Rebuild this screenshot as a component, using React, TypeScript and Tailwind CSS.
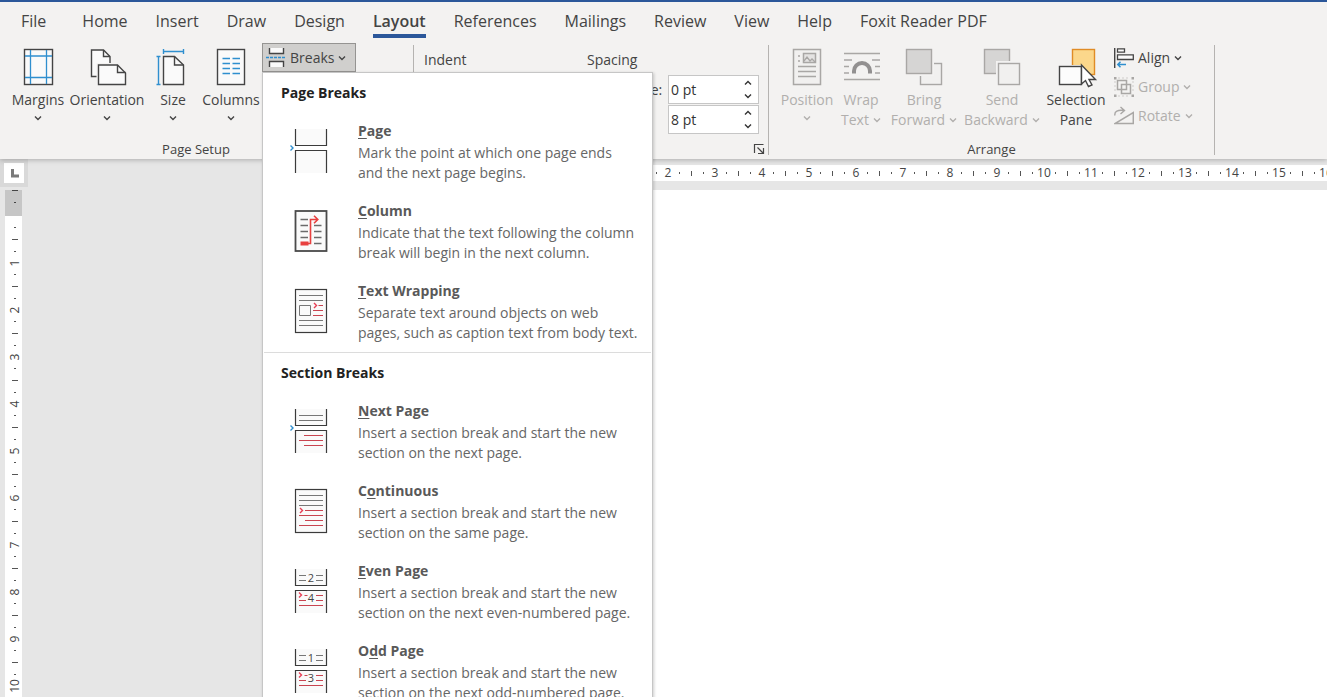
import type { ReactNode } from "react";
import clsx from "clsx";

const TABS = [
  "File",
  "Home",
  "Insert",
  "Draw",
  "Design",
  "Layout",
  "References",
  "Mailings",
  "Review",
  "View",
  "Help",
  "Foxit Reader PDF",
];

const DARK = "#444444";
const BLUE = "#2f8fcf";
const GRAY = "#a9a7a5";
const RED = "#c84450";

/* ---------- small shared pieces ---------- */

function Chevron({ up = false }: { up?: boolean }) {
  return (
    <svg width="8" height="6" viewBox="0 0 8 6" fill="none" stroke="currentColor" strokeWidth="1.4">
      <path d={up ? "M1 4.5 4 1.5 7 4.5" : "M1 1.5 4 4.5 7 1.5"} />
    </svg>
  );
}

function BigIcon({ children }: { children: ReactNode }) {
  return (
    <svg width="38" height="38" viewBox="0 0 38 38" fill="none" className="overflow-visible">
      {children}
    </svg>
  );
}

function SmallIcon({ children }: { children: ReactNode }) {
  return (
    <svg width="20" height="20" viewBox="0 0 20 20" fill="none" className="shrink-0">
      {children}
    </svg>
  );
}

type BigButtonProps = {
  icon: ReactNode;
  lines: string[];
  width: string;
  disabled?: boolean;
  chevron?: "below" | "inline";
};

function BigButton({ icon, lines, width, disabled, chevron }: BigButtonProps) {
  return (
    <button
      type="button"
      disabled={disabled}
      className={clsx(
        "flex shrink-0 flex-col items-center pt-[5px] text-sm leading-5 whitespace-nowrap",
        disabled ? "text-[#b1afad]" : "text-[#444444]",
        width
      )}
    >
      {icon}
      <span className="mt-1">{lines[0]}</span>
      {lines[1] && (
        <span className="flex items-center gap-1">
          {lines[1]}
          {chevron === "inline" && <Chevron />}
        </span>
      )}
      {chevron === "below" && (
        <span className="flex h-4 items-center">
          <Chevron />
        </span>
      )}
    </button>
  );
}

function SmallButton({ icon, label, disabled }: { icon: ReactNode; label: string; disabled?: boolean }) {
  return (
    <button
      type="button"
      disabled={disabled}
      className={clsx(
        "flex h-[29px] items-center gap-1 text-sm",
        disabled ? "text-[#b1afad]" : "text-[#444444]"
      )}
    >
      {icon}
      {label}
      <Chevron />
    </button>
  );
}

function GroupCaption({ children }: { children: ReactNode }) {
  return <div className="text-center text-[13px] leading-4 text-[#444444]">{children}</div>;
}

/* ---------- ribbon icons ---------- */

const marginsIcon = (
  <BigIcon>
    <rect x="5.5" y="1.5" width="28" height="35" fill="#fafafa" stroke={DARK} strokeWidth="1.4" />
    <path d="M11.5 2v34M27.5 2v34M6 8h27M6 29.5h27" stroke={BLUE} strokeWidth="1.3" />
  </BigIcon>
);

const orientationIcon = (
  <BigIcon>
    <path d="M9.5 28.5H3.5V2H15.5L22 8.5V15" fill="#fafafa" stroke={DARK} strokeWidth="1.4" />
    <path d="M15.5 2V8.5H22" stroke={DARK} strokeWidth="1.4" />
    <path d="M8.5 15H24V19H12V38H8.5Z" fill="#f3f2f1" />
    <path d="M10.5 17H29.5L37.5 25V36.5H10.5Z" fill="#fafafa" stroke={DARK} strokeWidth="1.4" />
    <path d="M29.5 17V24.5H37.5" stroke={DARK} strokeWidth="1.4" />
  </BigIcon>
);

const sizeIcon = (
  <BigIcon>
    <path d="M9.5 8.5H20.5L29.5 17V36.5H9.5Z" fill="#fafafa" stroke={DARK} strokeWidth="1.4" />
    <path d="M20.5 8.5V17H29.5" stroke={DARK} strokeWidth="1.4" />
    <path d="M9.5 3.5h20M9.5 1v5M29.5 1v5M4.5 8.5v28M2.5 8.5h4M2.5 36.5h4" stroke={BLUE} strokeWidth="1.4" />
  </BigIcon>
);

const columnsIcon = (
  <BigIcon>
    <rect x="5.5" y="1.5" width="27" height="35" fill="#fafafa" stroke={DARK} strokeWidth="1.4" />
    <path
      d="M10.5 10.5h7.5M10.5 15.5h7.5M10.5 20.5h7.5M10.5 25.5h7.5M20.5 10.5h7.5M20.5 15.5h7.5M20.5 20.5h7.5M20.5 25.5h7.5"
      stroke={BLUE}
      strokeWidth="1.5"
    />
  </BigIcon>
);

const breaksIcon = (
  <SmallIcon>
    <path d="M3.5 0V5.5H17.5V0M3.5 19V13.5H17.5V19" fill="#fafafa" stroke={DARK} strokeWidth="1.4" />
    <path d="M0 9.5H20" stroke={BLUE} strokeWidth="1.4" strokeDasharray="3 1" />
  </SmallIcon>
);

const positionIcon = (
  <BigIcon>
    <rect x="5.5" y="1.5" width="27" height="35" fill="#f1f0ef" stroke={GRAY} strokeWidth="1.5" />
    <rect x="15.5" y="5.5" width="12" height="9" fill="#e4e3e2" stroke={GRAY} strokeWidth="1.5" />
    <path d="M16 13l3-4 3 4 2-2 3 3" stroke={GRAY} strokeWidth="1.3" />
    <path d="M10 8h2M10 13h2M10 18.5h18M10 23.5h18M10 28.5h18" stroke={GRAY} strokeWidth="1.3" />
  </BigIcon>
);

const wrapIcon = (
  <BigIcon>
    <path
      d="M2 5.5h36M2 12h8M30 12h8M2 18.5h5M33 18.5h5M2 25h5M33 25h5M2 31.5h36"
      stroke={GRAY}
      strokeWidth="1.3"
    />
    <path d="M12 25.5V23A8 8 0 0 1 28 23V25.5" stroke="#929090" strokeWidth="4" />
  </BigIcon>
);

const bringIcon = (
  <BigIcon>
    <rect x="15.5" y="15.5" width="21" height="21" fill="#f1f0ef" stroke={GRAY} strokeWidth="1.4" />
    <rect x="1" y="1" width="28" height="27" fill="#f3f2f1" />
    <rect x="1.5" y="1.5" width="25" height="24" fill="#d6d5d4" stroke={GRAY} strokeWidth="1.4" />
  </BigIcon>
);

const sendIcon = (
  <BigIcon>
    <rect x="1.5" y="1.5" width="25" height="24" fill="#d6d5d4" stroke={GRAY} strokeWidth="1.4" />
    <rect x="13" y="13" width="24" height="24" fill="#f3f2f1" />
    <rect x="15.5" y="15.5" width="21" height="21" fill="#f1f0ef" stroke={GRAY} strokeWidth="1.4" />
  </BigIcon>
);

const selectionIcon = (
  <BigIcon>
    <rect x="15.5" y="1.5" width="22" height="25" fill="#fbd78b" stroke="#e08c26" strokeWidth="1.4" />
    <rect x="1" y="17" width="25" height="21" fill="#f3f2f1" />
    <rect x="2.5" y="18.5" width="22" height="18" fill="#fcfcfc" stroke={DARK} strokeWidth="1.4" />
    <path
      d="M24.5 17V36L28.5 32.5L31.5 38.5L35 37L32 31.5H38.5Z"
      fill="#ffffff"
      stroke={DARK}
      strokeWidth="1.4"
    />
  </BigIcon>
);

const alignIcon = (
  <SmallIcon>
    <path d="M.7 0V20" stroke={DARK} strokeWidth="1.4" />
    <path d="M3.5 .8H10.5V4.2H3.5ZM3.5 6.8H19.3V11.5H3.5Z" fill="#fafafa" stroke={DARK} strokeWidth="1.3" />
    <path d="M12 16.5H4M6.5 13.8 3.8 16.5 6.5 19.2" stroke={BLUE} strokeWidth="1.5" />
  </SmallIcon>
);

const groupIcon = (
  <SmallIcon>
    <path d="M3.5 3.5H12.5V12.5H3.5ZM7.5 7.5H16.5V16.5H7.5Z" stroke={GRAY} strokeWidth="1.5" />
    <path d="M0 0h2.5v2.5h-2.5ZM17.5 0h2.5v2.5h-2.5ZM0 17.5h2.5v2.5h-2.5ZM17.5 17.5h2.5v2.5h-2.5Z" fill={GRAY} />
    <path d="M4 1h12M4 19h12M1 4v12M19 4v12" stroke="#cfcdcb" strokeDasharray="2 2" />
  </SmallIcon>
);

const rotateIcon = (
  <SmallIcon>
    <path d="M1 17.5H19.3V6.5Z" stroke={GRAY} strokeWidth="1.5" />
    <path d="M1 9.5C0 5.5 4 3.5 10 4.5M6.5 1 10.5 4.5 6.5 8" stroke={GRAY} strokeWidth="1.4" />
  </SmallIcon>
);

/* ---------- Breaks menu ---------- */

function MenuIcon({ children }: { children: ReactNode }) {
  return (
    <svg width="40" height="48" viewBox="0 0 40 48" fill="none" className="mt-[15px] shrink-0">
      {children}
    </svg>
  );
}

function SplitSheets() {
  return <path d="M5.5 1V17.5H36.5V1M5.5 45V22.5H36.5V45" fill="#fafafa" stroke="#3b3b3b" strokeWidth="1.2" />;
}

function FullSheet() {
  return <rect x="5.5" y="1.5" width="31" height="43" fill="#fafafa" stroke="#3b3b3b" strokeWidth="1.2" />;
}

function NumberedSheets({ top, bottom }: { top: string; bottom: string }) {
  return (
    <MenuIcon>
      <SplitSheets />
      <path d="M9 7.5h7M9 12.5h7M26 7.5h7M26 12.5h7" stroke="#777777" />
      <path d="M14.5 27.5h3M26 27.5h7M9 32.5h7M26 32.5h7M9 37.5h24" stroke={RED} />
      <path d="M9 24.5 11.5 27 9 29.5" stroke="#e83e55" strokeWidth="1.4" />
      <text x="21" y="14" textAnchor="middle" fontSize="11" fill="#444444">
        {top}
      </text>
      <text x="21" y="34" textAnchor="middle" fontSize="11" fill="#444444">
        {bottom}
      </text>
    </MenuIcon>
  );
}

const pageIcon = (
  <MenuIcon>
    <SplitSheets />
    <path d="M.5 17.5 3 20 .5 22.5" stroke={BLUE} strokeWidth="1.4" />
  </MenuIcon>
);

const columnIcon = (
  <MenuIcon>
    <rect x="5.5" y="3" width="31" height="40" fill="#fafafa" stroke="#4a4a4a" strokeWidth="1.8" />
    <path
      d="M10.5 11.5H18M10.5 17.5H18M10.5 23.5H18M10.5 29.5H18M24 17.5h7.5M24 23.5h7.5M24 29.5h7.5M24 35.5h7.5"
      stroke="#6b6b6b"
      strokeWidth="1.3"
    />
    <rect x="10.5" y="33.5" width="8" height="4" fill="#e8403f" />
    <path d="M18 35.5H20.5V11.5H27.5M24 7.8 27.8 11.5 24 15.2" stroke="#e8403f" strokeWidth="1.6" />
  </MenuIcon>
);

const wrappingIcon = (
  <MenuIcon>
    <FullSheet />
    <path d="M9 7.5h24M9 12.5h24M9 32.5h24M9 37.5h24M9.5 17.5h11v10h-11Z" stroke="#777777" />
    <path d="M28.5 17.5H33M23 22.5H33M23 27.5H33" stroke={RED} />
    <path d="M24 15 26.5 17.5 24 20" stroke="#e83e55" strokeWidth="1.4" />
  </MenuIcon>
);

const nextPageIcon = (
  <MenuIcon>
    <SplitSheets />
    <path d="M9 7.5h24M9 12.5h24" stroke="#777777" />
    <path d="M14 27.5H33M9 32.5H33M14 37.5H33" stroke={RED} />
    <path d="M.5 17.5 3 20 .5 22.5" stroke={BLUE} strokeWidth="1.4" />
  </MenuIcon>
);

const continuousIcon = (
  <MenuIcon>
    <FullSheet />
    <path d="M9 7.5h24M9 12.5h24M9 17.5h24" stroke="#777777" />
    <path d="M15 22.5H33M9 27.5H33M15 32.5H33M9 37.5H33" stroke={RED} />
    <path d="M10 20 12.5 22.5 10 25" stroke="#e83e55" strokeWidth="1.4" />
  </MenuIcon>
);

type MenuEntry = {
  label: string;
  keyIndex: number;
  text: [string, string];
  icon: ReactNode;
};

const PAGE_BREAKS: MenuEntry[] = [
  {
    label: "Page",
    keyIndex: 0,
    text: ["Mark the point at which one page ends", "and the next page begins."],
    icon: pageIcon,
  },
  {
    label: "Column",
    keyIndex: 0,
    text: ["Indicate that the text following the column", "break will begin in the next column."],
    icon: columnIcon,
  },
  {
    label: "Text Wrapping",
    keyIndex: 0,
    text: ["Separate text around objects on web", "pages, such as caption text from body text."],
    icon: wrappingIcon,
  },
];

const SECTION_BREAKS: MenuEntry[] = [
  {
    label: "Next Page",
    keyIndex: 0,
    text: ["Insert a section break and start the new", "section on the next page."],
    icon: nextPageIcon,
  },
  {
    label: "Continuous",
    keyIndex: 1,
    text: ["Insert a section break and start the new", "section on the same page."],
    icon: continuousIcon,
  },
  {
    label: "Even Page",
    keyIndex: 0,
    text: ["Insert a section break and start the new", "section on the next even-numbered page."],
    icon: <NumberedSheets top="2" bottom="4" />,
  },
  {
    label: "Odd Page",
    keyIndex: 1,
    text: ["Insert a section break and start the new", "section on the next odd-numbered page."],
    icon: <NumberedSheets top="1" bottom="3" />,
  },
];

function MenuSection({ title, entries }: { title: string; entries: MenuEntry[] }) {
  return (
    <section>
      <h2 className="h-10 pl-[18px] text-sm leading-10 font-bold text-[#222222]">{title}</h2>
      {entries.map(({ label, keyIndex, text, icon }) => (
        <button
          key={label}
          type="button"
          role="menuitem"
          className="flex h-20 w-full gap-7 pl-[27px] text-left text-sm leading-5 whitespace-nowrap text-[#666666]"
        >
          {icon}
          <span className="pt-2">
            <span className="mb-[2px] block font-bold text-[#595959]">
              {label.slice(0, keyIndex)}
              <span className="underline underline-offset-2">{label[keyIndex]}</span>
              {label.slice(keyIndex + 1)}
            </span>
            {text[0]}
            <br />
            {text[1]}
          </span>
        </button>
      ))}
    </section>
  );
}

function BreaksMenu() {
  return (
    <div
      role="menu"
      className="absolute top-full left-0 z-20 w-[391px] border border-[#c6c6c6] bg-white shadow-[1px_1px_3px_rgba(0,0,0,0.2)]"
    >
      <MenuSection title="Page Breaks" entries={PAGE_BREAKS} />
      <hr className="mx-px -mt-px border-[#dcdcdc]" />
      <MenuSection title="Section Breaks" entries={SECTION_BREAKS} />
    </div>
  );
}

/* ---------- ribbon ---------- */

function SpacingField({ id, label, value }: { id: string; label: string; value: string }) {
  return (
    <div className="flex items-center justify-between">
      <label htmlFor={id} className="text-sm text-[#444444]">
        {label}
      </label>
      <div className="flex h-[29px] w-[91px] border border-[#c6c6c6] bg-white">
        <input id={id} defaultValue={value} className="w-full min-w-0 pl-[2px] text-sm text-[#333333] outline-none" />
        <div className="flex w-5 shrink-0 flex-col text-[#333333]">
          <button type="button" aria-label={`Increase ${label}`} className="flex flex-1 items-center justify-center">
            <Chevron up />
          </button>
          <button type="button" aria-label={`Decrease ${label}`} className="flex flex-1 items-center justify-center">
            <Chevron />
          </button>
        </div>
      </div>
    </div>
  );
}

function Ribbon() {
  return (
    <div className="flex h-[116px]">
      {/* Page Setup */}
      <div className="flex w-[413px] shrink-0 flex-col justify-between pb-[2px] pl-2">
        <div className="flex items-start">
          <BigButton icon={marginsIcon} lines={["Margins"]} width="w-[60px]" chevron="below" />
          <BigButton icon={orientationIcon} lines={["Orientation"]} width="w-[78px]" chevron="below" />
          <BigButton icon={sizeIcon} lines={["Size"]} width="w-[54px]" chevron="below" />
          <BigButton icon={columnsIcon} lines={["Columns"]} width="w-[62px]" chevron="below" />
          <div className="relative">
            <button
              type="button"
              aria-haspopup="menu"
              aria-expanded="true"
              className="flex h-[29px] w-[94px] items-center gap-1 border border-[#959492] bg-[#d0cfcd] pl-[3px] text-sm text-[#444444]"
            >
              {breaksIcon}
              Breaks
              <Chevron />
            </button>
            <BreaksMenu />
          </div>
        </div>
        <div className="pr-[29px]">
          <GroupCaption>Page Setup</GroupCaption>
        </div>
      </div>

      <div className="mt-[2px] mb-1 w-px shrink-0 bg-[#b5b3b1]" />

      {/* Paragraph */}
      <div className="flex w-[354px] shrink-0 flex-col justify-between pr-[9px] pb-1 pl-[10px] text-sm text-[#444444]">
        <div className="flex leading-[30px]">
          <div className="w-[163px] pt-[2px]">Indent</div>
          <div className="flex-1 pt-[2px]">
            <div>Spacing</div>
            <div className="flex flex-col gap-px pl-7">
              <SpacingField id="before" label="Before:" value="0 pt" />
              <SpacingField id="after" label="After:" value="8 pt" />
            </div>
          </div>
        </div>
        <button type="button" aria-label="Paragraph settings" className="-mr-[6px] self-end">
          <svg width="12" height="12" viewBox="0 0 12 12" fill="none" stroke={DARK} strokeWidth="1.2">
            <path d="M1.5 10V1.5H10.5M4.5 4.5 10 10M10.5 5V10.5H5" />
          </svg>
        </button>
      </div>

      <div className="mt-[2px] mb-1 w-px shrink-0 bg-[#b5b3b1]" />

      {/* Arrange */}
      <div className="flex w-[445px] shrink-0 flex-col justify-between pb-[2px]">
        <div className="flex items-start pl-[10px]">
          <BigButton icon={positionIcon} lines={["Position"]} width="w-[56px]" chevron="below" disabled />
          <BigButton icon={wrapIcon} lines={["Wrap", "Text"]} width="w-[52px]" chevron="inline" disabled />
          <BigButton icon={bringIcon} lines={["Bring", "Forward"]} width="w-[74px]" chevron="inline" disabled />
          <BigButton icon={sendIcon} lines={["Send", "Backward"]} width="w-[82px]" chevron="inline" disabled />
          <BigButton icon={selectionIcon} lines={["Selection", "Pane"]} width="w-[66px]" />
          <div className="pl-[5px]">
            <SmallButton icon={alignIcon} label="Align" />
            <SmallButton icon={groupIcon} label="Group" disabled />
            <SmallButton icon={rotateIcon} label="Rotate" disabled />
          </div>
        </div>
        <GroupCaption>Arrange</GroupCaption>
      </div>

      <div className="mt-[2px] mb-1 w-px shrink-0 bg-[#b5b3b1]" />
    </div>
  );
}

/* ---------- rulers ---------- */

function HorizontalRuler() {
  const marks = Array.from({ length: 30 }, (_, i) => i + 1);

  return (
    <div className="flex h-4 overflow-hidden bg-white pl-[142px] text-xs leading-4 text-[#444444]">
      {marks.map((n) => (
        <div key={n} className="grid w-[47px] shrink-0 grid-cols-4 items-center">
          <span className="flex justify-center">{n}</span>
          <span className="h-[2px] w-px justify-self-center bg-[#555555]" />
          <span className="h-[5px] w-px justify-self-center bg-[#555555]" />
          <span className="h-[2px] w-px justify-self-center bg-[#555555]" />
        </div>
      ))}
    </div>
  );
}

function VerticalRuler() {
  const marks = Array.from({ length: 20 }, (_, i) => i + 1);

  return (
    <div className="ml-[5px] flex min-h-0 w-[17px] flex-1 flex-col overflow-hidden bg-white text-xs text-[#444444]">
      <div className="flex h-[26px] shrink-0 flex-col items-center gap-[11px] bg-[#c6c6c6] pl-[3px]">
        <span className="h-px w-[6px] bg-[#444444]" />
        <span className="h-px w-[2px] bg-[#444444]" />
      </div>
      <div className="pt-[6px] pl-[3px]">
        {marks.map((n) => (
          <div key={n} className="grid h-[47px] grid-rows-4 items-center justify-items-center">
            <span className="h-px w-[2px] bg-[#555555]" />
            <span className="h-px w-[6px] bg-[#555555]" />
            <span className="h-px w-[2px] bg-[#555555]" />
            <span className="flex h-0 -rotate-90 items-center">{n}</span>
          </div>
        ))}
      </div>
    </div>
  );
}

export default function App() {
  return (
    <div className="flex h-screen flex-col overflow-hidden bg-[#e6e6e6] font-['Open_Sans','Noto_Sans',sans-serif]">
      <header className="relative z-10 border-t-2 border-[#2b579a] bg-[#f3f2f1] shadow-[0_1px_5px_rgba(0,0,0,0.25)]">
        <nav className="flex h-[41px] items-start gap-7 pl-[21px] whitespace-nowrap">
          {TABS.map((tab) => (
            <button
              key={tab}
              type="button"
              className={clsx(
                "h-9 border-b-4 pt-[2px] text-base leading-[34px] text-[#444444] first:mr-2",
                tab === "Layout" ? "border-[#2b579a] font-semibold" : "border-transparent"
              )}
            >
              {tab}
            </button>
          ))}
        </nav>
        <Ribbon />
      </header>

      <main className="flex min-h-0 flex-1">
        <div className="flex w-7 shrink-0 flex-col">
          <button
            type="button"
            aria-label="Tab selector"
            className="mb-[3px] flex h-7 w-7 items-center justify-center border-4 border-[#d9d9d9] bg-white"
          >
            <svg width="9" height="9" viewBox="0 0 9 9" fill="none" stroke="#7a7a7a" strokeWidth="3">
              <path d="M2.5 0V7H9" />
            </svg>
          </button>
          <VerticalRuler />
        </div>
        <div className="flex min-w-0 flex-1 flex-col pt-[6px] pl-[445px]">
          <HorizontalRuler />
          <div className="mt-[9px] flex-1 bg-white" />
        </div>
      </main>
    </div>
  );
}
